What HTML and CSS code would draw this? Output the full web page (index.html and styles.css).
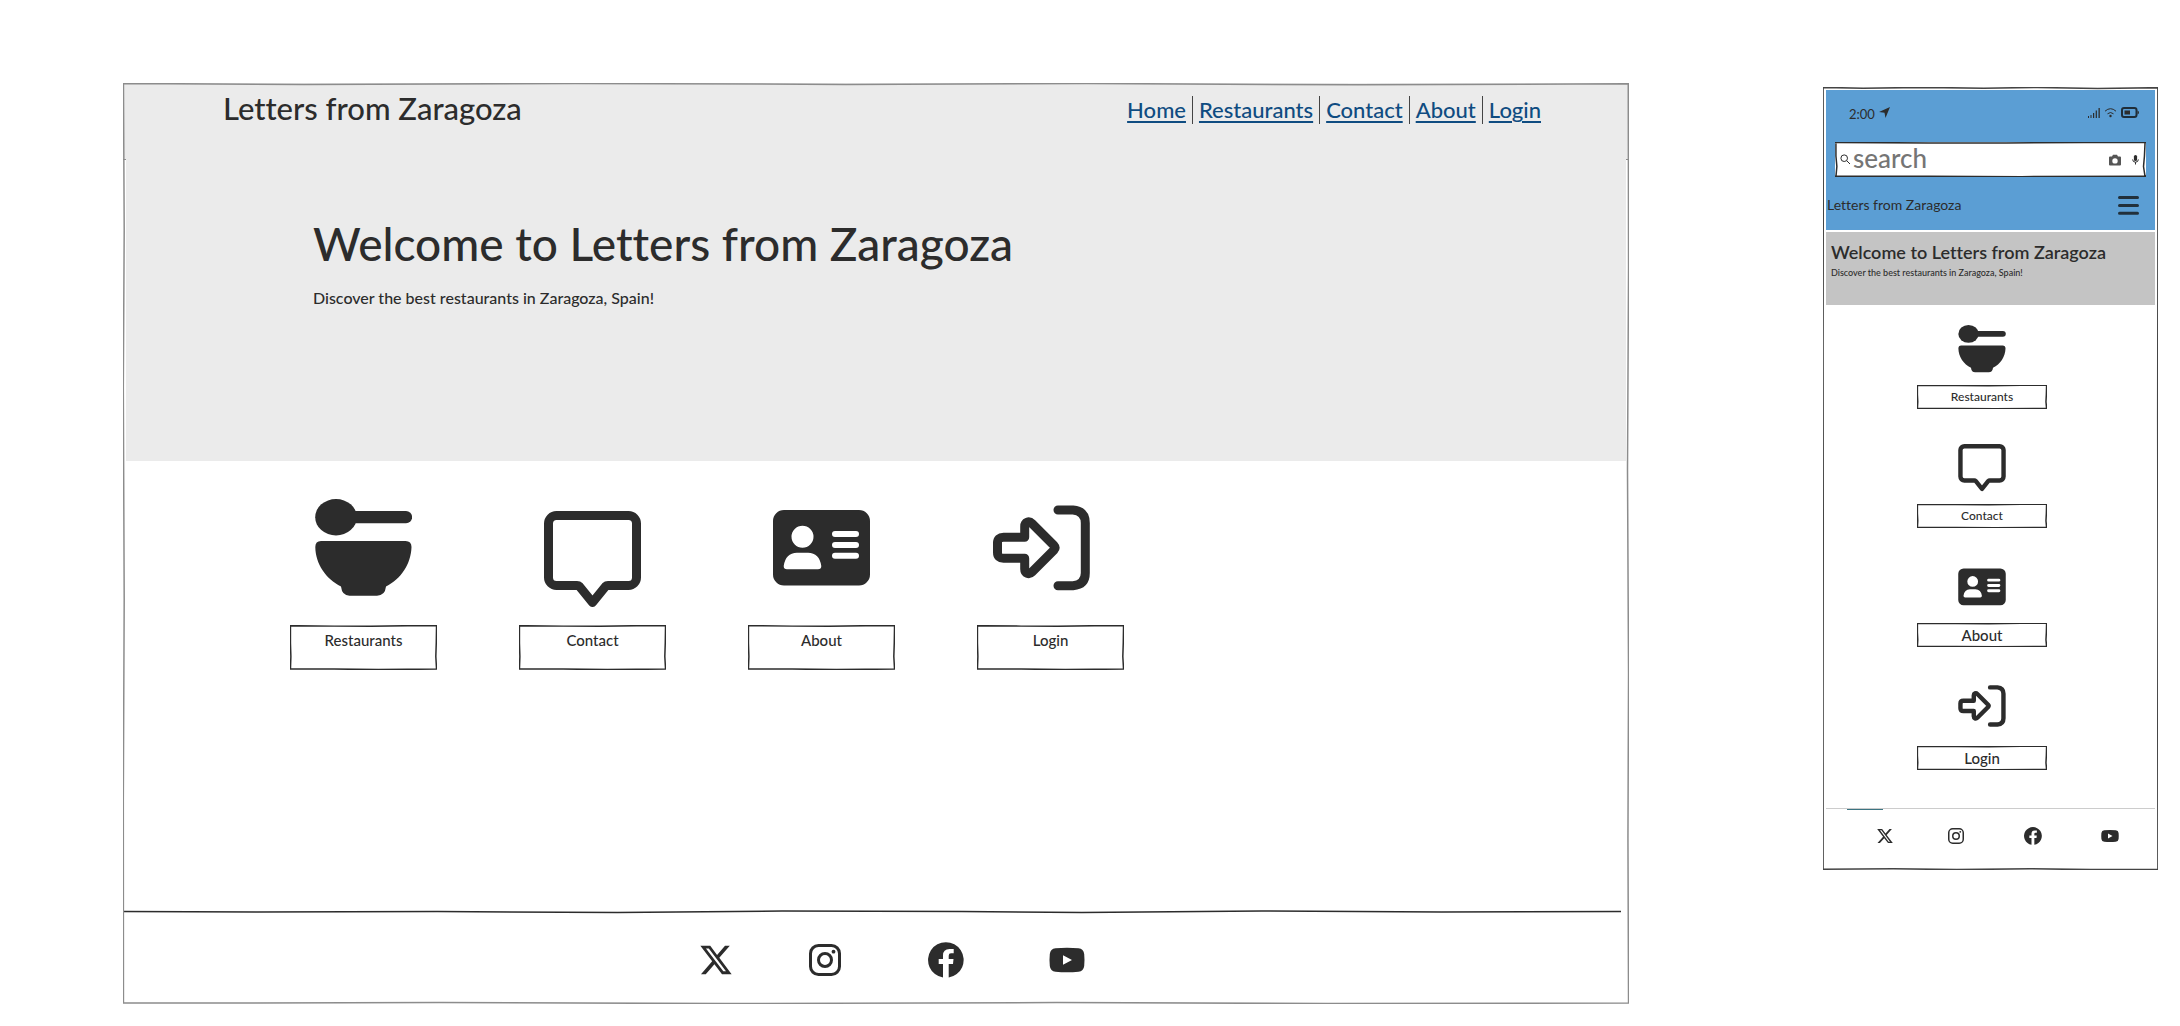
FILE: index.html
```html
<!DOCTYPE html>
<html lang="en">
<head>
<meta charset="utf-8">
<meta name="viewport" content="width=device-width, initial-scale=1">
<title>Letters from Zaragoza</title>
<link rel="stylesheet" href="styles.css">
</head>
<body>
<svg class="sprite" aria-hidden="true">
  <symbol id="frame" viewBox="0 0 1000 1000" preserveAspectRatio="none">
    <path vector-effect="non-scaling-stroke" d="M.3 .5L120 1.500 300 .5 480 1.500 640 .5 820 2 999.500 .8 999.700 200 999 420 999.700 640 999.300 820 999.700 999 800 999.500 620 998.500 400 999.500 210 998.500 .3 999 .2 780 .8 560 .2 330 .8 160Z"/>
  </symbol>
  <symbol id="box" viewBox="0 0 100 100" preserveAspectRatio="none">
    <path vector-effect="non-scaling-stroke" d="M0 1.500L30 2.500 55 3 80 1.500 100 1.500M99.700 0L99.500 40 99.200 70 99.700 99M100 98L60 99 30 98 0 98M.3 0L.3 40 .6 70 .3 99"/>
  </symbol>
  <symbol id="rule" viewBox="0 0 1000 4" preserveAspectRatio="none">
    <path vector-effect="non-scaling-stroke" d="M0 1.500L90 2 210 1.500 330 2.500 440 1 560 1.500 640 2.500 760 1 880 2 1000 1.500"/>
  </symbol>
  <symbol id="bowl" viewBox="0 0 97 98">
    <ellipse cx="21" cy="18.200" rx="20.800" ry="18.200"/>
    <path d="M36 12H91a6.100 6.100 0 0 1 0 12.200H36Z"/>
    <path d="M6 42H90.500Q96.500 42 96.500 48C96 65 86 80 71 87.500Q70 96.700 62 96.700H34.500Q27 96.700 26 87.500C11 80 .5 65 .3 48Q.3 42 6 42Z"/>
  </symbol>
  <symbol id="bubble" viewBox="0 0 97 98">
    <path class="line" d="M12.500 4.500H84.500a8 8 0 0 1 8 8V66.500a8 8 0 0 1-8 8H64Q62.500 74.500 61.500 75.500L48.500 91.500 35.500 75.500Q34.500 74.500 33 74.500H12.500a8 8 0 0 1-8-8V12.500a8 8 0 0 1 8-8Z"/>
  </symbol>
  <symbol id="card" viewBox="0 0 97 98">
    <path fill-rule="evenodd" d="M11 11H86a11 11 0 0 1 11 11V75.500a11 11 0 0 1-11 11H11a11 11 0 0 1-11-11V22A11 11 0 0 1 11 11ZM29.500 26.700a11 11 0 1 0 0 22 11 11 0 1 0 0-22ZM24 53.700Q12.500 54 10.700 67Q10.700 70.300 14 70.300H45Q48.300 70.300 48.300 67Q46.500 54 35 53.700ZM62 32a3 3 0 0 0 0 6H83a3 3 0 0 0 0-6ZM62 42.900a3 3 0 0 0 0 6H83a3 3 0 0 0 0-6ZM62 53.700a3 3 0 0 0 0 6H83a3 3 0 0 0 0-6Z"/>
  </symbol>
  <symbol id="enter" viewBox="0 0 97 98">
    <path class="line" d="M65 11H80Q92.300 12 92.300 24V74Q92.300 85.700 80 86.700H65"/>
    <path class="line" d="M10.500 38.200H31.700V27.500C31.700 23 36 21.500 39 24.500L61 46.500Q63 48.700 61 51L39 73C36 76 31.700 74.500 31.700 70V59.300H10.500Q4.500 59.300 4.500 53.500V44Q4.500 38.200 10.500 38.200Z"/>
  </symbol>
  <symbol id="x" viewBox="-1.200 -1 18.400 18">
    <path d="M12.600.75h2.454l-5.360 6.142L16 15.250h-4.937l-3.867-5.070-4.425 5.070H.316l5.733-6.570L0 .75h5.063l3.495 4.633L12.601.75Zm-.86 13.028h1.360L4.323 2.145H2.865z"/>
  </symbol>
  <symbol id="instagram" viewBox="0 0 36 36">
    <rect class="thin" x="3.500" y="3.500" width="29" height="29" rx="8"/>
    <circle class="thin" cx="18" cy="18" r="6.500"/>
    <circle cx="26.500" cy="9.700" r="1.900"/>
  </symbol>
  <symbol id="facebook" viewBox="0 0 36 36">
    <path d="M15 35.500V22H10.700V17H15V13.500Q15 7 21.500 7H25.700V11.300H23Q20.700 11.300 20.700 13.700V17H25.500L25 22H20.700V35.500A17.800 17.800 0 1 0 15 35.500Z"/>
  </symbol>
  <symbol id="youtube" viewBox="0 0 36 36">
    <path fill-rule="evenodd" d="M6.500 6.300Q18 5.300 29.500 6.300Q34.600 6.800 35.200 12Q35.800 18 35.200 24Q34.600 29.200 29.500 29.700Q18 30.700 6.500 29.700Q1.400 29.200 .8 24Q.2 18 .8 12Q1.400 6.800 6.500 6.300ZM14 13.200V22.800L23 18Z"/>
  </symbol>
</svg>

<main class="board">
  <section class="screen desktop" aria-label="Desktop layout">
    <header class="desktop__header">
      <span class="desktop__brand">Letters from Zaragoza</span>
      <nav aria-label="Main">
        <ul class="menu">
          <li><a href="#home">Home</a></li>
          <li><a href="#restaurants">Restaurants</a></li>
          <li><a href="#contact">Contact</a></li>
          <li><a href="#about">About</a></li>
          <li><a href="#login">Login</a></li>
        </ul>
      </nav>
    </header>
    <div class="desktop__hero">
      <h1>Welcome to Letters from Zaragoza</h1>
      <p>Discover the best restaurants in Zaragoza, Spain!</p>
    </div>
    <div class="desktop__features">
      <div class="feature"><svg class="icon"><use href="#bowl"/></svg><button type="button"><svg class="edge"><use href="#box"/></svg>Restaurants</button></div>
      <div class="feature feature--contact"><svg class="icon"><use href="#bubble"/></svg><button type="button"><svg class="edge"><use href="#box"/></svg>Contact</button></div>
      <div class="feature"><svg class="icon"><use href="#card"/></svg><button type="button"><svg class="edge"><use href="#box"/></svg>About</button></div>
      <div class="feature feature--login"><svg class="icon"><use href="#enter"/></svg><button type="button"><svg class="edge"><use href="#box"/></svg>Login</button></div>
    </div>
    <svg class="rule" aria-hidden="true"><use href="#rule"/></svg>
    <footer class="desktop__footer">
      <ul class="social">
        <li><a href="#x" aria-label="X"><svg><use href="#x"/></svg></a></li>
        <li><a href="#instagram" aria-label="Instagram"><svg><use href="#instagram"/></svg></a></li>
        <li><a href="#facebook" aria-label="Facebook"><svg><use href="#facebook"/></svg></a></li>
        <li><a href="#youtube" aria-label="YouTube"><svg><use href="#youtube"/></svg></a></li>
      </ul>
    </footer>
    <svg class="edge edge--soft" aria-hidden="true"><use href="#frame"/></svg>
  </section>

  <section class="screen phone" aria-label="Phone layout">
    <header class="phone__header">
      <div class="status">
        <span class="status__time">2:00
          <svg width="11" height="11" viewBox="0 0 11 11"><path d="M11 0L6.500 11 5.500 5.800 0 5Z"/></svg>
        </span>
        <span class="status__icons">
          <svg width="12" height="11" viewBox="0 0 12 11"><path d="M0 9h1v2H0zM2.500 8h1v3h-1zM5 6h1.200v5H5zM7.700 3.500h1.200V11H7.700zM10.500 1h1.300v10h-1.300z"/></svg>
          <svg width="13" height="11" viewBox="0 0 13 11"><path class="wave" d="M1 4.200Q6.500-.8 12 4.200M3.500 6.800Q6.500 4.200 9.500 6.800"/><circle cx="6.500" cy="9" r="1.200"/></svg>
          <svg width="18" height="11" viewBox="0 0 18 11"><rect class="cell" x="1" y="1" width="14.500" height="9" rx="2"/><path d="M3.500 3.500h5.500v4H3.500zM16.500 3.500Q18 4 18 5.500T16.500 7.500z"/></svg>
        </span>
      </div>
      <form class="search" role="search">
        <svg width="11" height="11" viewBox="0 0 11 11"><circle class="lens" cx="4.200" cy="4.200" r="3.300"/><path class="lens" d="M6.700 6.700L10 10"/></svg>
        <input type="search" aria-label="Search" placeholder="search">
        <button type="button" aria-label="Search by picture"><svg width="12" height="12" viewBox="0 0 12 12"><path class="camera" fill-rule="evenodd" d="M4 .8H8L9 2.500H11Q12 2.500 12 3.500V10.500Q12 11.500 11 11.500H1Q0 11.500 0 10.500V3.500Q0 2.500 1 2.500H3ZM6 4.200a2.700 2.700 0 1 0 0 5.400 2.700 2.700 0 1 0 0-5.400Z"/></svg></button>
        <button type="button" aria-label="Search by voice"><svg width="7" height="12" viewBox="0 0 7 12"><rect x="1.900" y="1" width="3.200" height="6" rx="1.600"/><path class="wave" d="M.6 5.500Q.8 8.200 3.500 8.200T6.400 5.500M3.500 8.200V10.500"/></svg></button>
        <svg class="edge" aria-hidden="true"><use href="#box"/></svg>
      </form>
      <div class="titlebar">
        <span>Letters from Zaragoza</span>
        <button type="button" aria-label="Menu"><svg width="21" height="19" viewBox="0 0 21 19"><path class="bars" d="M1.500 1.500H19.500M1.500 9.500H19.500M1.500 17.200H19.500"/></svg></button>
      </div>
    </header>
    <div class="phone__hero">
      <h2>Welcome to Letters from Zaragoza</h2>
      <p>Discover the best restaurants in Zaragoza, Spain!</p>
    </div>
    <div class="phone__features">
      <div class="feature"><svg class="icon"><use href="#bowl"/></svg><button type="button"><svg class="edge"><use href="#box"/></svg>Restaurants</button></div>
      <div class="feature"><svg class="icon"><use href="#bubble"/></svg><button type="button"><svg class="edge"><use href="#box"/></svg>Contact</button></div>
      <div class="feature feature--large"><svg class="icon"><use href="#card"/></svg><button type="button"><svg class="edge"><use href="#box"/></svg>About</button></div>
      <div class="feature feature--large feature--login"><svg class="icon"><use href="#enter"/></svg><button type="button"><svg class="edge"><use href="#box"/></svg>Login</button></div>
    </div>
    <footer class="phone__footer">
      <div class="marker"></div>
      <ul class="social">
        <li><a href="#x" aria-label="X"><svg><use href="#x"/></svg></a></li>
        <li><a href="#instagram" aria-label="Instagram"><svg><use href="#instagram"/></svg></a></li>
        <li><a href="#facebook" aria-label="Facebook"><svg><use href="#facebook"/></svg></a></li>
        <li><a href="#youtube" aria-label="YouTube"><svg><use href="#youtube"/></svg></a></li>
      </ul>
    </footer>
    <svg class="edge edge--dark" aria-hidden="true"><use href="#frame"/></svg>
  </section>
</main>
</body>
</html>
```
FILE: styles.css
```css
* { box-sizing: border-box; }

body {
  margin: 0;
  background: #fff;
  color: #2c2c2c;
  font-family: Lato, "Open Sans", sans-serif;
  font-variant-ligatures: none;
}

h1, h2, p, ul { margin: 0; padding: 0; font-weight: 500; }
ul { list-style: none; display: flex; }
svg { display: block; fill: #2c2c2c; }
button {
  border: 0;
  padding: 0;
  background: none;
  color: inherit;
  font: inherit;
  font-weight: 500;
}

.sprite { position: absolute; width: 0; height: 0; }
.line { fill: none; stroke: #2c2c2c; stroke-width: 9; stroke-linecap: round; stroke-linejoin: round; }
.thin { fill: none; stroke: #2c2c2c; stroke-width: 3; }
.wave { fill: none; stroke: #2c2c2c; stroke-width: 1; }
.cell { fill: none; stroke: #1f2d38; stroke-width: 2; }
.lens { fill: none; stroke: #2c2c2c; stroke-width: 1; }
.camera { fill: #555; }
.bars { stroke: #22303b; stroke-width: 3; stroke-linecap: round; }

/* Hand-drawn outline laid over a box */
.edge {
  position: absolute;
  inset: 0;
  width: 100%;
  height: 100%;
  fill: none;
  stroke: #2c2c2c;
  stroke-width: 1.5;
  pointer-events: none;
}
.edge--soft { stroke: #8c8c8c; }
.edge--dark { stroke: #444; }

.board {
  display: grid;
  grid-template-columns: minmax(0, 1506fr) minmax(0, 335fr);
  column-gap: 194px;
  align-items: start;
  padding: 83px 22px 22px 123px;
}
.screen { position: relative; }

/* Desktop layout */
.desktop__header {
  display: flex;
  justify-content: space-between;
  align-items: flex-start;
  min-height: 77px;
  padding: 7px 88px 0 100px;
  border-bottom: 1px solid #8c8c8c;
  background: #ebebeb;
}
.desktop__brand { font-size: 31px; line-height: 36px; font-weight: 500; }
.menu { padding-top: 6px; }
.menu li {
  padding: 0 6px;
  font-size: 22px;
  line-height: 28px;
  font-weight: 500;
}
.menu li + li { border-left: 1px solid #444; }
.menu li:last-child { padding-right: 0; }
.menu a {
  color: #0f4c81;
  text-decoration-thickness: 2px;
  text-underline-offset: 3px;
}
.desktop__hero {
  min-height: 302px;
  margin: -1px 3px 0;
  padding: 55px 187px 0;
  background: #ebebeb;
}
.desktop__hero h1 { font-size: 46px; line-height: 60px; }
.desktop__hero p { padding-top: 12px; font-size: 16px; line-height: 24px; }

.feature { display: flex; flex-direction: column; align-items: center; }
.feature button { position: relative; }

.desktop__features {
  display: flex;
  gap: 82px;
  padding: 38px 167px 240px;
}
.desktop__features .feature { width: 147px; }
.desktop__features .icon { width: 97px; height: 98px; margin-bottom: 28px; }
.desktop__features .feature--contact .icon { margin: 12px 0 16px; }
.desktop__features .feature--login .icon { margin-right: 18px; }
.desktop__features button {
  width: 100%;
  height: 45px;
  padding-bottom: 16px;
  font-size: 15px;
  line-height: 20px;
}
.rule { width: calc(100% - 8px); height: 4px; stroke: #2c2c2c; stroke-width: 1.5; fill: none; }
.desktop__footer { padding: 28px 0 26px 575px; }
.social { gap: 73px; }
.social svg { width: 36px; height: 36px; }
.social li:nth-child(n + 3) { margin-left: 12px; }

/* Phone layout */
.phone { margin-top: 4px; padding: 3px; }
.phone__header { height: 140px; background: #5b9ed4; }
.status {
  display: flex;
  justify-content: space-between;
  padding: 15px 16px 0 23px;
  font-size: 13px;
  line-height: 18px;
}
.status__time, .status__icons { display: flex; gap: 4px; }
.status__time svg, .status__icons svg { margin-top: 2px; }
.search {
  position: relative;
  display: flex;
  align-items: center;
  height: 35px;
  margin: 19px 9px 0;
  padding: 0 7px 0 5px;
  background: #fff;
}
.search input {
  flex: 1;
  min-width: 0;
  height: 32px;
  padding: 0 2px 3px;
  border: 0;
  background: none;
  color: #2c2c2c;
  font: 500 26px/28px Lato, "Open Sans", sans-serif;
}
.search input::placeholder { color: #757575; opacity: 1; }
.search button + button { margin-left: 11px; }
.titlebar {
  display: flex;
  justify-content: space-between;
  align-items: center;
  padding: 16px 16px 0 1px;
  font-size: 14px;
  line-height: 24px;
}
.phone__hero { height: 73px; margin-top: 2px; padding: 8px 5px 0; background: #c4c4c4; }
.phone__hero h2 { font-size: 18px; line-height: 24px; font-weight: 600; white-space: nowrap; }
.phone__hero p { padding-top: 1px; font-size: 9px; line-height: 16px; }

.phone__features {
  display: flex;
  flex-direction: column;
  align-items: center;
  gap: 35px;
  padding: 20px 17px 38px 0;
}
.phone__features .icon { width: 48px; height: 48px; margin-bottom: 12px; }
.phone__features button { width: 130px; height: 24px; font-size: 12px; line-height: 20px; }
.phone__features .feature--large button { font-size: 15px; }
.phone__features .feature--login .icon { margin-bottom: 16px; }
.phone__footer { padding-bottom: 22px; border-top: 1px solid #ccc; }
.marker { width: 36px; height: 1px; margin-left: 21px; background: #3c7482; }
.phone .social { justify-content: center; gap: 53px; padding: 17px 0 0 13px; }
.phone .social svg { width: 18px; height: 18px; }
.phone .social li:nth-child(n + 3) { margin-left: 6px; }
```
